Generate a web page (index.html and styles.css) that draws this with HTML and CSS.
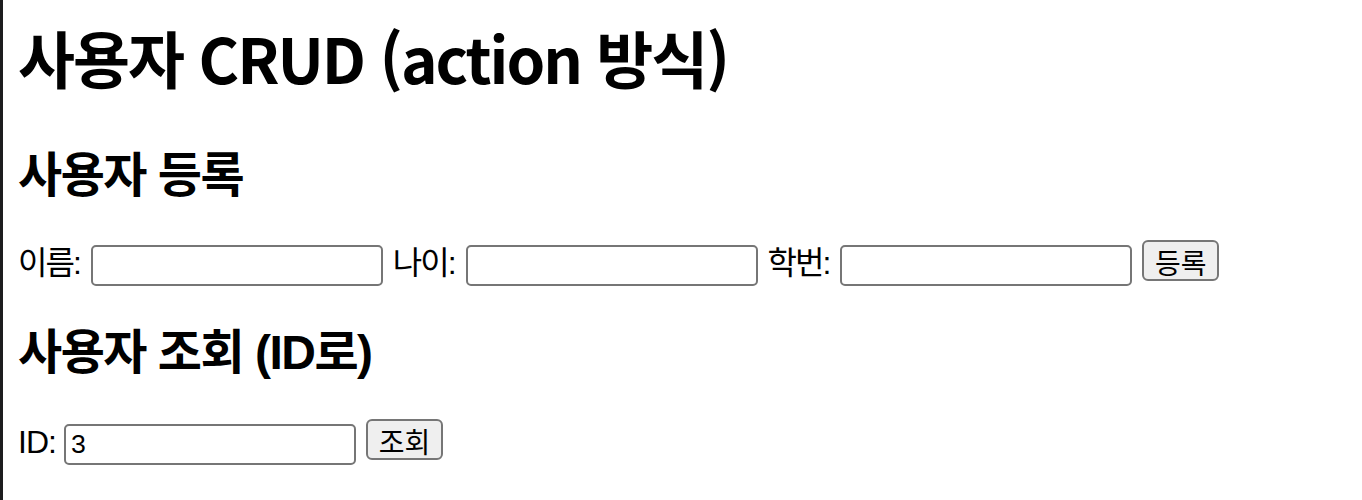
FILE: index.html
```html
<!DOCTYPE html>
<html lang="ko">
<head>
<meta charset="utf-8">
<title>사용자 CRUD</title>
<link rel="stylesheet" href="styles.css">
</head>
<body>
<h1 class="title">사용자 CRUD (action 방식)</h1>

<h2 class="section">사용자 등록</h2>
<form class="row">
  <label class="lbl">이름:</label>
  <input class="field" type="text">
  <label class="lbl">나이:</label>
  <input class="field" type="text">
  <label class="lbl">학번:</label>
  <input class="field" type="text">
  <button class="btn" type="button">등록</button>
</form>

<h2 class="section section-2">사용자 조회 (ID로)</h2>
<form class="row row-2">
  <label class="lbl lbl-id">ID:</label>
  <input class="field" type="text" value="3">
  <button class="btn" type="button">조회</button>
</form>
</body>
</html>
```

FILE: styles.css
```css
html {
  border-left: 3px solid #1c1c1e;
  min-height: 100%;
  background: #fff;
}
body {
  margin: 0;
  padding: 0 0 0 15px;
  font-family: "Liberation Sans", "Noto Sans CJK KR", sans-serif;
  font-size: 32px;
  color: #000;
}
.title {
  margin: 19px 0 0;
  font-family: "Noto Sans CJK KR", sans-serif;
  font-size: 62px;
  font-weight: 700;
  line-height: 77px;
  letter-spacing: -2px;
}
.section {
  margin: 51px 0 0;
  font-size: 48px;
  font-weight: 700;
  line-height: 58px;
  letter-spacing: -1.5px;
}
.section-2 {
  margin-top: 38px;
}
.row {
  display: flex;
  align-items: baseline;
  margin: 32px 0 0;
}
.row-2 {
  margin-top: 37px;
}
.lbl {
  margin-right: 11px;
  letter-spacing: -2px;
}
.lbl-id {
  letter-spacing: -1px;
  margin-right: 8px;
}
.field {
  box-sizing: border-box;
  width: 292px;
  height: 41px;
  margin: 0 10px 0 0;
  padding: 1px 5px;
  border: 2px solid #767676;
  border-radius: 5px;
  font-family: "Liberation Sans", "Noto Sans CJK KR", sans-serif;
  font-size: 26.67px;
  color: #000;
  background: #fff;
}
.btn {
  box-sizing: border-box;
  width: 77px;
  height: 41px;
  padding: 0;
  border: 2px solid #767676;
  border-radius: 6px;
  background: #efefef;
  font-family: "Liberation Sans", "Noto Sans CJK KR", sans-serif;
  font-size: 28px;
  color: #000;
}
```
